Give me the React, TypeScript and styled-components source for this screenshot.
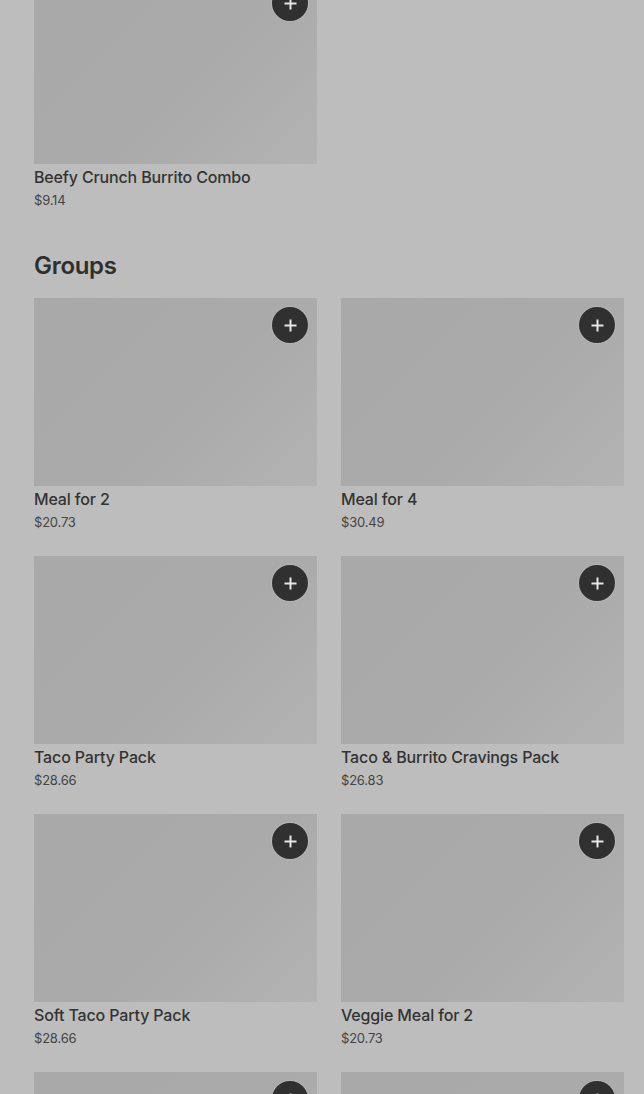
import React from "react";
import styled, { createGlobalStyle } from "styled-components";

const Global = createGlobalStyle`
  html, body { margin: 0; padding: 0; background: #bdbdbd; }
  body { font-family: Inter, "Noto Sans", "Liberation Sans", sans-serif; overflow: hidden; }
  * { box-sizing: border-box; }
`;

const Page = styled.div`
  padding: 0 20px 0 34px;
  height: 1094px;
  overflow: hidden;
`;

const Section = styled.section<{ $offset?: number }>`
  margin-top: ${(p) => (p.$offset != null ? `${p.$offset}px` : "41px")};
`;

const Heading = styled.h2`
  margin: 0 0 17px;
  font-size: 24px;
  line-height: 30px;
  font-weight: 600;
  color: #2f2f2f;
  letter-spacing: -0.3px;
`;

const Grid = styled.div`
  display: grid;
  grid-template-columns: 283px 283px;
  column-gap: 24px;
  row-gap: 24px;
`;

const Card = styled.div`
  display: flex;
  flex-direction: column;
`;

const Thumb = styled.div`
  position: relative;
  height: 188px;
  background: linear-gradient(135deg, #a9a9a9 0%, #aaaaaa 55%, #b3b3b3 100%);
`;

const AddButton = styled.button`
  position: absolute;
  top: 9px;
  right: 9px;
  width: 36px;
  height: 36px;
  border-radius: 50%;
  border: none;
  padding: 0;
  background: #303030;
  display: flex;
  align-items: center;
  justify-content: center;
  box-shadow: 0 0 0 1px rgba(200, 200, 200, 0.35);
`;

const Title = styled.div`
  margin-top: 2px;
  font-size: 16px;
  line-height: 22px;
  font-weight: 500;
  color: #333333;
  letter-spacing: -0.15px;
`;

const Price = styled.div`
  margin-top: 2px;
  font-size: 13px;
  line-height: 20px;
  font-weight: 400;
  color: #444444;
  letter-spacing: -0.2px;
`;

const Plus = () => (
  <svg width="13" height="13" viewBox="0 0 13 13">
    <path d="M6.5 1.5v10M1.5 6.5h10" stroke="#e6e6e6" strokeWidth="2" strokeLinecap="square" />
  </svg>
);

type Item = { name: string; price: string };

const ItemCard = ({ item }: { item: Item }) => (
  <Card>
    <Thumb>
      <AddButton aria-label="Add">
        <Plus />
      </AddButton>
    </Thumb>
    <Title>{item.name}</Title>
    <Price>{item.price}</Price>
  </Card>
);

const combos: Item[] = [{ name: "Beefy Crunch Burrito Combo", price: "$9.14" }];

const groups: Item[] = [
  { name: "Meal for 2", price: "$20.73" },
  { name: "Meal for 4", price: "$30.49" },
  { name: "Taco Party Pack", price: "$28.66" },
  { name: "Taco & Burrito Cravings Pack", price: "$26.83" },
  { name: "Soft Taco Party Pack", price: "$28.66" },
  { name: "Veggie Meal for 2", price: "$20.73" },
  { name: "Nachos Party Pack", price: "$27.43" },
  { name: "Burrito Party Pack", price: "$30.49" },
];

export default function App() {
  return (
    <Page>
      <Global />
      <Section $offset={-24}>
        <Grid>
          {combos.map((c) => (
            <ItemCard key={c.name} item={c} />
          ))}
        </Grid>
      </Section>
      <Section>
        <Heading>Groups</Heading>
        <Grid>
          {groups.map((g) => (
            <ItemCard key={g.name} item={g} />
          ))}
        </Grid>
      </Section>
    </Page>
  );
}
